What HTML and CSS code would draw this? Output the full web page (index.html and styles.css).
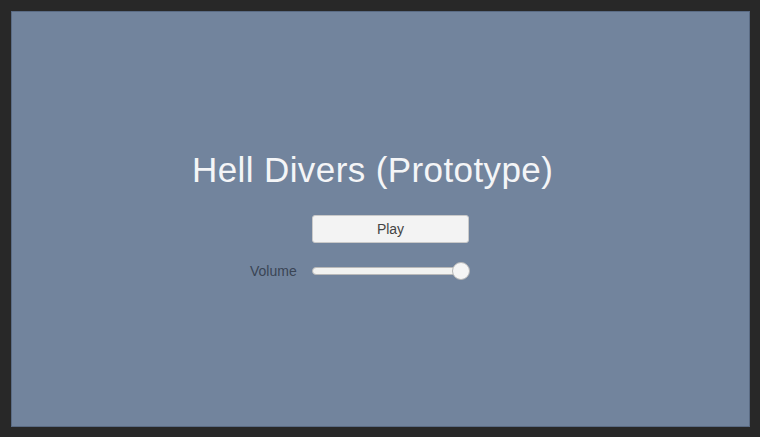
FILE: index.html
```html
<!DOCTYPE html>
<html lang="en">
<head>
    <meta charset="UTF-8">
    <meta name="viewport" content="width=device-width, initial-scale=1.0">
    <title>Hell Divers (Prototype)</title>
    <link rel="stylesheet" href="styles.css">
</head>
<body>
    <div class="game-view">
        <div class="menu">
            <h1 class="title">Hell Divers (Prototype)</h1>
            <button type="button" class="play-button">Play</button>
            <div class="volume-row">
                <label for="volume">Volume</label>
                <div class="slider" id="volume">
                    <div class="slider-track"></div>
                    <div class="slider-thumb"></div>
                </div>
            </div>
        </div>
    </div>
</body>
</html>
```

FILE: styles.css
```css
* {
    margin: 0;
    padding: 0;
    box-sizing: border-box;
}

html, body {
    height: 100%;
}

body {
    font-family: 'Liberation Sans', Arial, sans-serif;
    background: #282828;
    padding: 11px 10px 10px 11px;
}

.game-view {
    height: 100%;
    background: #72849d;
    border: 1px solid #5a6b84;
    padding: 138px 0 0 180px;
}

.menu {
    display: flex;
    flex-direction: column;
    align-items: flex-start;
}

.title {
    color: #f4f5f7;
    font-weight: normal;
    font-size: 35px;
    letter-spacing: 0.4px;
    line-height: 40px;
}

.play-button {
    width: 157px;
    height: 28px;
    margin: 25px 0 0 120px;
    background: #f3f3f3;
    border: 1px solid #c9c9c9;
    border-radius: 3px;
    font-family: inherit;
    font-size: 14px;
    color: #444;
}

.volume-row {
    display: flex;
    align-items: center;
    margin: 19px 0 0 58px;
}

.volume-row label {
    color: #3a4555;
    font-size: 14px;
    width: 62px;
}

.slider {
    position: relative;
    width: 158px;
    height: 18px;
}

.slider-track {
    position: absolute;
    left: 0;
    right: 8px;
    top: 5px;
    height: 8px;
    background: #f2f2f0;
    border: 1px solid #b9b9b9;
    border-radius: 4px;
}

.slider-thumb {
    position: absolute;
    right: 0;
    top: 0;
    width: 18px;
    height: 18px;
    background: #f5f5f5;
    border: 1px solid #b6b6b6;
    border-radius: 50%;
}
```
